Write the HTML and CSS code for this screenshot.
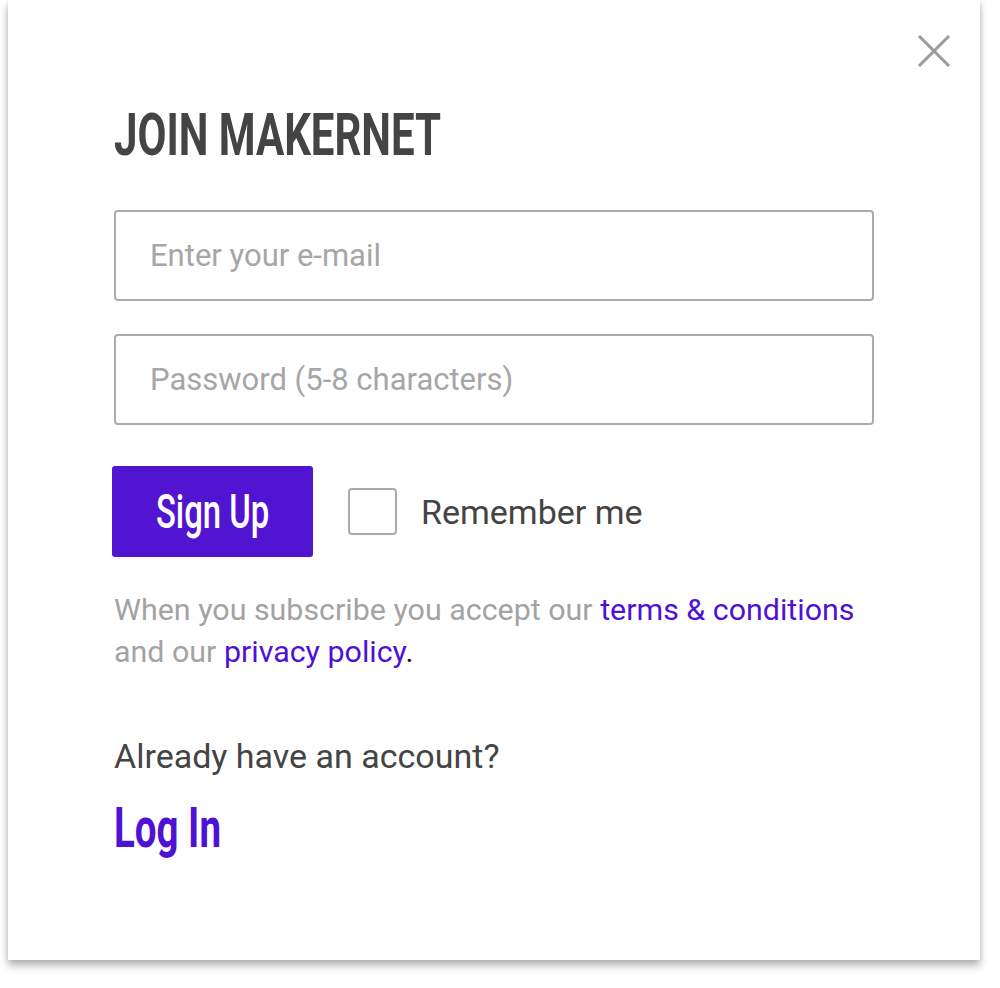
FILE: index.html
```html
<!DOCTYPE html>
<html lang="en">
<head>
<meta charset="utf-8">
<title>Join Makernet</title>
<link rel="stylesheet" href="styles.css">
</head>
<body>
<div class="modal">
  <button class="close" aria-label="Close">
    <svg width="34" height="32" viewBox="0 0 34 32"><path d="M2 1 L32 31 M32 1 L2 31" stroke="#9b9b9b" stroke-width="3" fill="none"/></svg>
  </button>
  <h1 class="title"><span class="cond">JOIN MAKERNET</span></h1>
  <form class="form">
    <input class="field" type="email" placeholder="Enter your e-mail">
    <input class="field" type="password" placeholder="Password (5-8 characters)">
    <div class="actions">
      <button type="button" class="signup"><span class="cond">Sign Up</span></button>
      <label class="remember"><span class="box"></span><span>Remember me</span></label>
    </div>
  </form>
  <p class="terms">When you subscribe you accept our <a href="#">terms &amp; conditions</a> and our <a href="#">privacy policy</a><span class="dot">.</span></p>
  <p class="already">Already have an account?</p>
  <a class="login" href="#"><span class="cond">Log In</span></a>
</div>
</body>
</html>
```

FILE: styles.css
```css
html, body {
  margin: 0;
  padding: 0;
  background: #ffffff;
}
body {
  padding: 0 8px 28px;
  font-family: Roboto, "Liberation Sans", sans-serif;
  color: #444444;
}
.modal {
  position: relative;
  width: 972px;
  height: 960px;
  box-sizing: border-box;
  padding: 105px 106px 0;
  background: #ffffff;
  box-shadow: 0 6px 8px rgba(0, 0, 0, 0.28), 0 0 4px rgba(0, 0, 0, 0.12);
  display: flex;
  flex-direction: column;
  align-items: flex-start;
}
.close {
  position: absolute;
  top: 35px;
  right: 29px;
  padding: 0;
  border: 0;
  background: none;
  line-height: 0;
  cursor: pointer;
}
.cond {
  display: inline-block;
  transform: scaleX(0.7);
  transform-origin: left center;
  white-space: nowrap;
}
.title {
  margin: 0;
  font-family: Roboto, "Liberation Sans", sans-serif;
  font-weight: 700;
  font-size: 60px;
  line-height: 60px;
  color: #444444;
  height: 60px;
}
.form {
  margin-top: 45px;
  width: 760px;
  display: flex;
  flex-direction: column;
}
.field {
  box-sizing: border-box;
  width: 760px;
  height: 91px;
  border: 2px solid #ababab;
  border-radius: 4px;
  padding: 0 0 0 34px;
  font-family: Roboto, "Liberation Sans", sans-serif;
  font-size: 31px;
  color: #444444;
  outline: none;
}
.field + .field {
  margin-top: 33px;
}
.field::placeholder {
  color: #a6a6a6;
}
.actions {
  margin-top: 41px;
  margin-left: -2px;
  display: flex;
  align-items: center;
}
.signup {
  width: 201px;
  height: 91px;
  border: 0;
  border-radius: 3px;
  background: #5115d1;
  color: #ffffff;
  font-family: Roboto, "Liberation Sans", sans-serif;
  font-weight: 500;
  font-size: 49px;
  padding: 0;
  display: flex;
  justify-content: center;
  align-items: center;
  cursor: pointer;
}
.signup .cond {
  transform: scaleX(0.67);
  transform-origin: center center;
}
.remember {
  display: flex;
  align-items: center;
  margin-left: 35px;
  font-size: 34px;
  color: #444444;
}
.box {
  box-sizing: border-box;
  width: 49px;
  height: 47px;
  border: 2px solid #aaaaaa;
  border-radius: 4px;
  margin-right: 24px;
}
.terms {
  margin: 32px 0 0;
  width: 770px;
  font-size: 30.4px;
  line-height: 42px;
  color: #a3a3a3;
}
.terms a {
  color: #4f12d4;
  text-decoration: none;
}
.terms .dot {
  color: #111111;
}
.already {
  margin: 63px 0 0;
  font-size: 34px;
  line-height: 40px;
  color: #444444;
}
.login {
  margin-top: 25px;
  font-weight: 700;
  font-size: 55px;
  line-height: 55px;
  color: #4f12d4;
  text-decoration: none;
}
```
